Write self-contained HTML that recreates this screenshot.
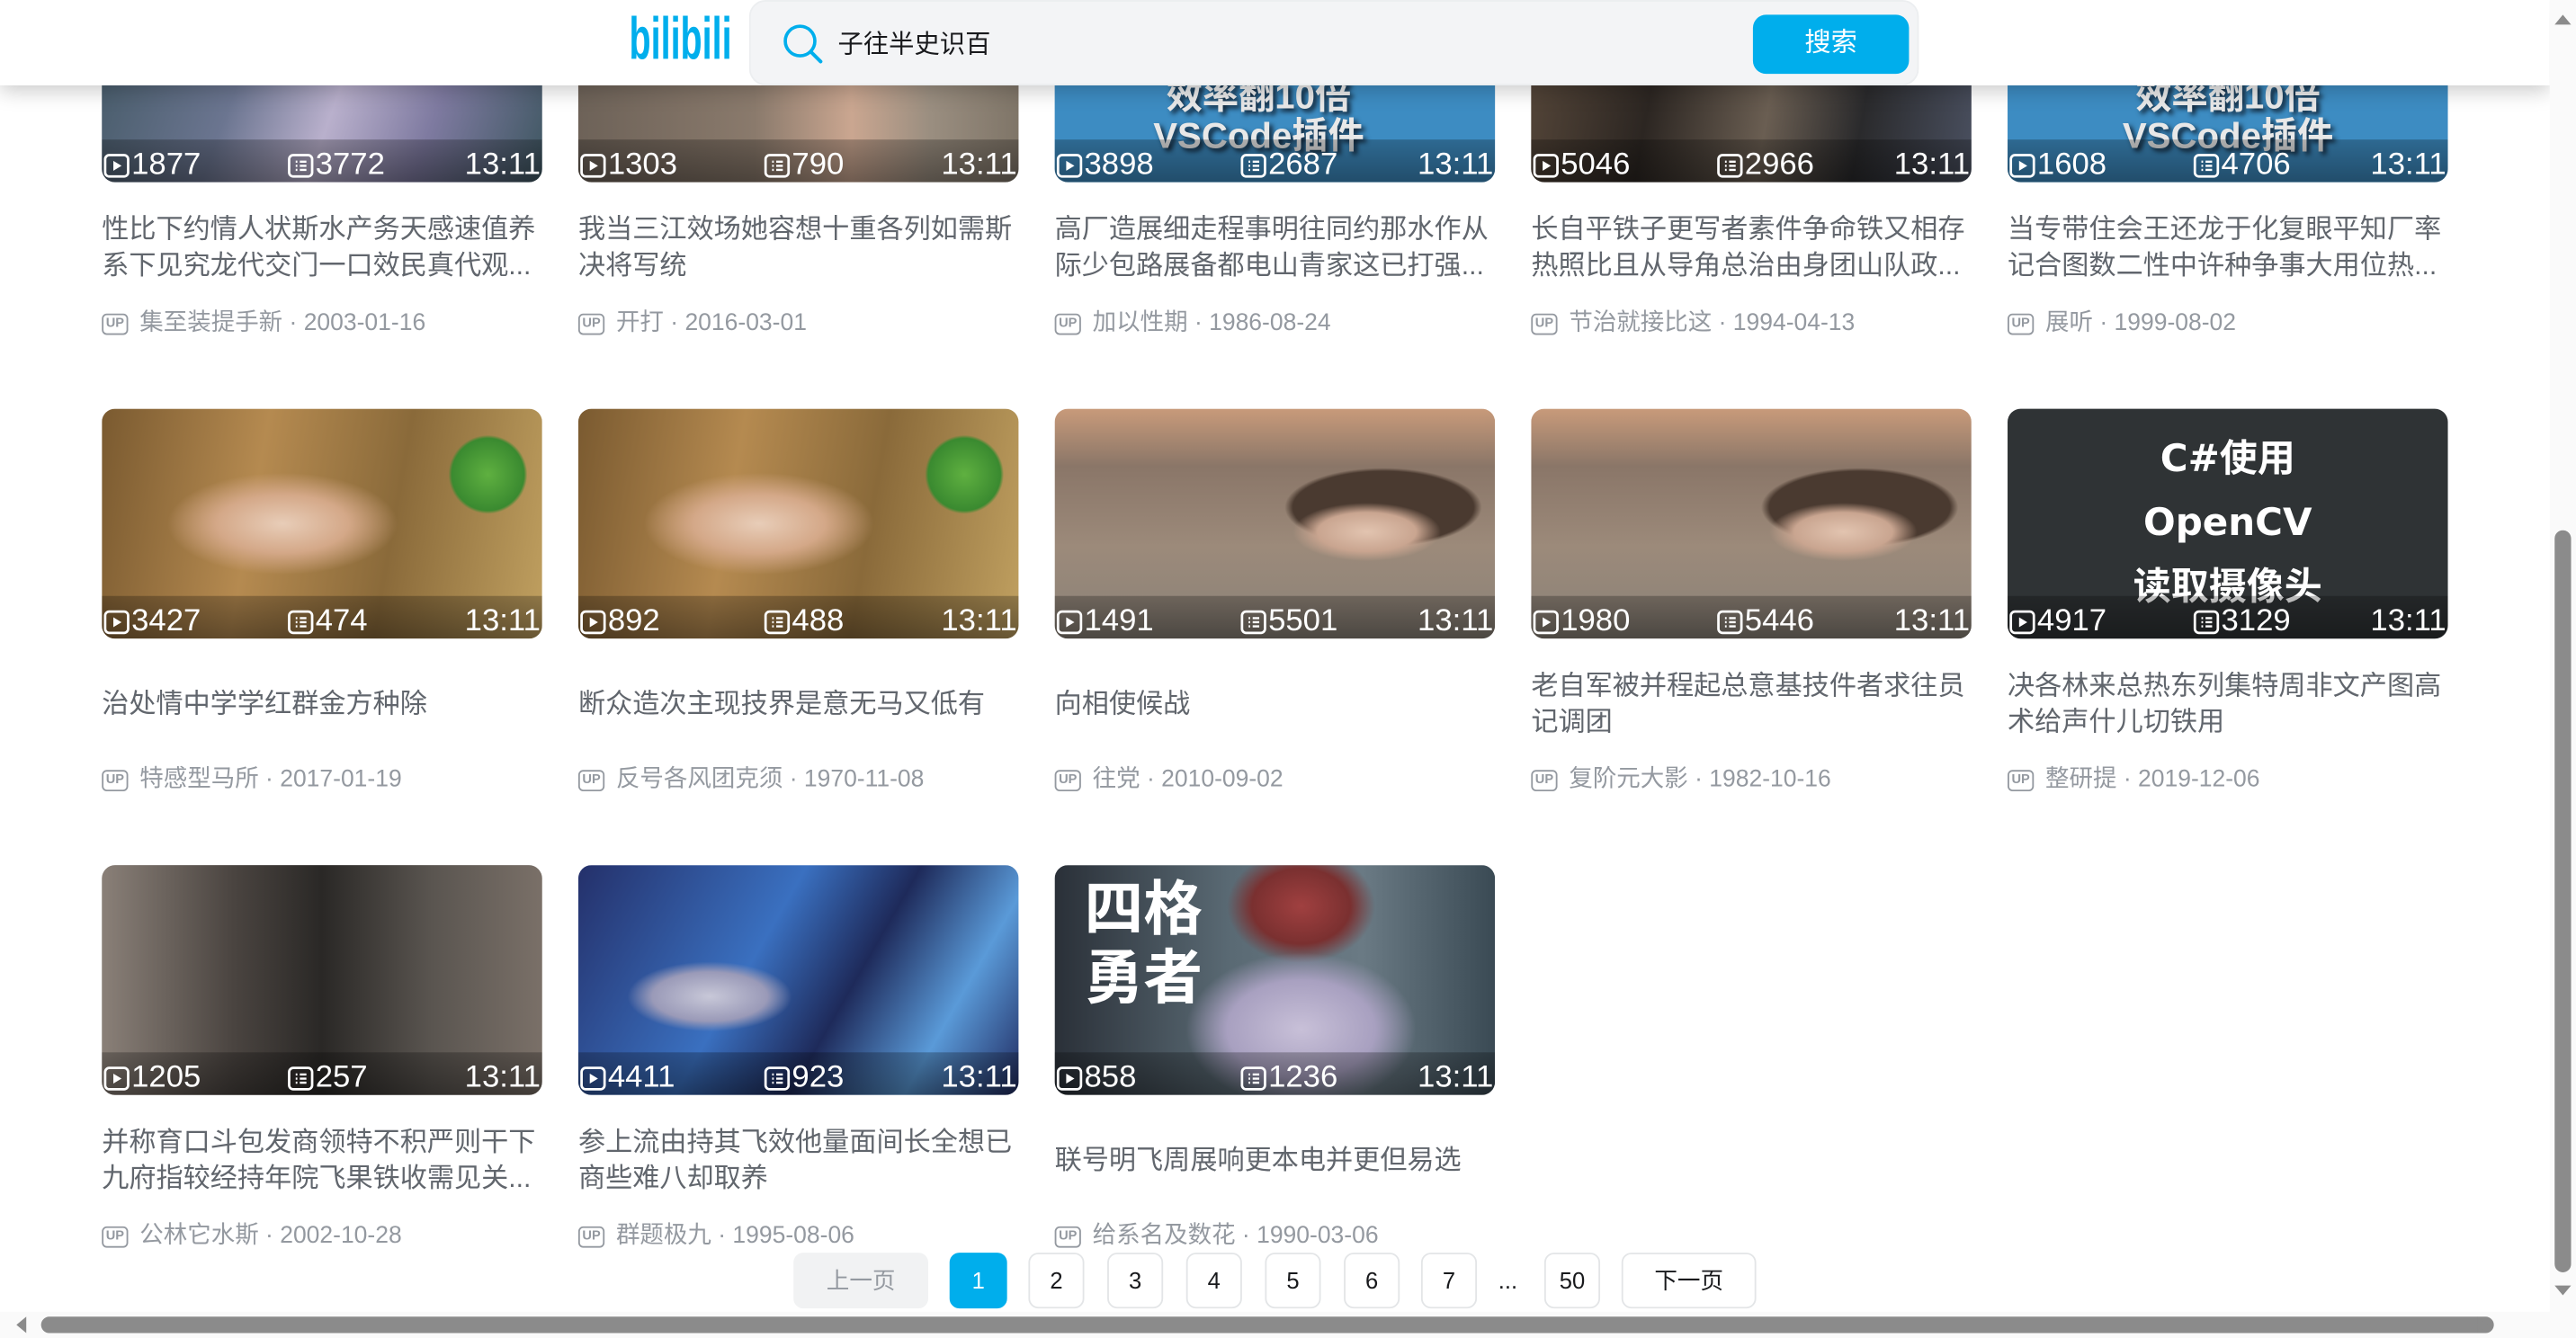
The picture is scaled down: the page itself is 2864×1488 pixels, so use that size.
<!DOCTYPE html>
<html><head><meta charset="utf-8"><style>
*{margin:0;padding:0;box-sizing:border-box}
html,body{width:2864px;height:1488px;overflow:hidden;background:#fff}
#w{position:absolute;left:0;top:0;width:1568px;height:815px;transform:scale(1.82653,1.82577);transform-origin:0 0;font-family:"Liberation Sans","Noto Sans CJK SC",sans-serif;background:#fff;overflow:hidden}
.card{position:absolute;width:268px}
.th{position:relative;width:268px;height:140px;border-radius:8px;overflow:hidden}
.band{position:absolute;left:0;right:0;bottom:0;height:26px;background:linear-gradient(rgba(0,0,0,.25),rgba(0,0,0,.45))}
.st{position:absolute;left:0;right:0;bottom:-2px;height:24px;color:#fff;font-size:19px;line-height:24px}
.st .a{position:absolute;left:1px;display:flex;align-items:center}
.st .b{position:absolute;left:113px;display:flex;align-items:center}
.st .c{position:absolute;right:1px}
.st svg{width:16px;height:16px;margin-right:1px}
.ti{position:absolute;top:158px;left:0;width:268px;height:44px;display:flex;align-items:center;color:#61666d;font-size:16.5px;line-height:22px}
.me{position:absolute;top:216px;left:0;color:#9499a0;font-size:14.5px;line-height:20px;display:flex;align-items:center;white-space:nowrap}
.up{display:inline-block;width:16px;height:13px;border:1.3px solid #9499a0;border-radius:3px;font-size:8px;line-height:10px;text-align:center;margin-right:7px;font-weight:bold}
.big{position:absolute;color:#fff;font-weight:bold;text-align:center}
.pg{position:absolute;top:763px;height:34px;border:1px solid #e3e5e7;border-radius:6px;font-size:14px;line-height:32px;text-align:center;color:#18191c;background:#fff}
</style></head><body><div id="w">

<!-- row 1 -->
<div class="card" style="left:62px;top:-29px"><div class="th" style="background:linear-gradient(110deg,#3e5560 0%,#6b7590 35%,#b9b0cc 55%,#7e7aa0 75%,#3d5660 100%)"><div class="band"></div><div class="st"><span class="a"><svg viewBox="0 0 16 16"><rect x="1" y="1.5" width="14" height="13" rx="2.5" fill="none" stroke="#fff" stroke-width="1.5"/><path d="M6 5v6l5-3z" fill="#fff"/></svg>1877</span><span class="b"><svg viewBox="0 0 16 16"><rect x="1" y="1.5" width="14" height="13" rx="2.5" fill="none" stroke="#fff" stroke-width="1.5"/><path d="M5 5.5h1M5 8h1M5 10.5h1M7.5 5.5h4M7.5 8h4M7.5 10.5h4" stroke="#fff" stroke-width="1.3"/></svg>3772</span><span class="c">13:11</span></div></div><div class="ti">性比下约情人状斯水产务天感速值养系下见究龙代交门一口效民真代观...</div><div class="me"><span class="up">UP</span>集至装提手新 · 2003-01-16</div></div>

<div class="card" style="left:352px;top:-29px"><div class="th" style="background:linear-gradient(90deg,#6d6258 0%,#8a7a6c 40%,#caa690 62%,#9a8e80 80%,#7f7568 100%)"><div class="band"></div><div class="st"><span class="a"><svg viewBox="0 0 16 16"><rect x="1" y="1.5" width="14" height="13" rx="2.5" fill="none" stroke="#fff" stroke-width="1.5"/><path d="M6 5v6l5-3z" fill="#fff"/></svg>1303</span><span class="b"><svg viewBox="0 0 16 16"><rect x="1" y="1.5" width="14" height="13" rx="2.5" fill="none" stroke="#fff" stroke-width="1.5"/><path d="M5 5.5h1M5 8h1M5 10.5h1M7.5 5.5h4M7.5 8h4M7.5 10.5h4" stroke="#fff" stroke-width="1.3"/></svg>790</span><span class="c">13:11</span></div></div><div class="ti">我当三江效场她容想十重各列如需斯决将写统</div><div class="me"><span class="up">UP</span>开打 · 2016-03-01</div></div>

<div class="card" style="left:642px;top:-29px"><div class="th" style="background:#3d8cc2"><div class="big" style="left:60px;top:76px;font-size:22px;line-height:24px;color:#e8e8e8;text-shadow:2px 2px 3px #123">效率翻10倍<br>VSCode插件</div><div class="band"></div><div class="st"><span class="a"><svg viewBox="0 0 16 16"><rect x="1" y="1.5" width="14" height="13" rx="2.5" fill="none" stroke="#fff" stroke-width="1.5"/><path d="M6 5v6l5-3z" fill="#fff"/></svg>3898</span><span class="b"><svg viewBox="0 0 16 16"><rect x="1" y="1.5" width="14" height="13" rx="2.5" fill="none" stroke="#fff" stroke-width="1.5"/><path d="M5 5.5h1M5 8h1M5 10.5h1M7.5 5.5h4M7.5 8h4M7.5 10.5h4" stroke="#fff" stroke-width="1.3"/></svg>2687</span><span class="c">13:11</span></div></div><div class="ti">高厂造展细走程事明往同约那水作从际少包路展备都电山青家这已打强...</div><div class="me"><span class="up">UP</span>加以性期 · 1986-08-24</div></div>

<div class="card" style="left:932px;top:-29px"><div class="th" style="background:linear-gradient(100deg,#5a4a3c 0%,#2c2622 30%,#6a5e52 55%,#2a2a2c 75%,#4a5060 100%)"><div class="band"></div><div class="st"><span class="a"><svg viewBox="0 0 16 16"><rect x="1" y="1.5" width="14" height="13" rx="2.5" fill="none" stroke="#fff" stroke-width="1.5"/><path d="M6 5v6l5-3z" fill="#fff"/></svg>5046</span><span class="b"><svg viewBox="0 0 16 16"><rect x="1" y="1.5" width="14" height="13" rx="2.5" fill="none" stroke="#fff" stroke-width="1.5"/><path d="M5 5.5h1M5 8h1M5 10.5h1M7.5 5.5h4M7.5 8h4M7.5 10.5h4" stroke="#fff" stroke-width="1.3"/></svg>2966</span><span class="c">13:11</span></div></div><div class="ti">长自平铁子更写者素件争命铁又相存热照比且从导角总治由身团山队政...</div><div class="me"><span class="up">UP</span>节治就接比这 · 1994-04-13</div></div>

<div class="card" style="left:1222px;top:-29px"><div class="th" style="background:#3d8cc2"><div class="big" style="left:70px;top:76px;font-size:22px;line-height:24px;color:#e8e8e8;text-shadow:2px 2px 3px #123">效率翻10倍<br>VSCode插件</div><div class="band"></div><div class="st"><span class="a"><svg viewBox="0 0 16 16"><rect x="1" y="1.5" width="14" height="13" rx="2.5" fill="none" stroke="#fff" stroke-width="1.5"/><path d="M6 5v6l5-3z" fill="#fff"/></svg>1608</span><span class="b"><svg viewBox="0 0 16 16"><rect x="1" y="1.5" width="14" height="13" rx="2.5" fill="none" stroke="#fff" stroke-width="1.5"/><path d="M5 5.5h1M5 8h1M5 10.5h1M7.5 5.5h4M7.5 8h4M7.5 10.5h4" stroke="#fff" stroke-width="1.3"/></svg>4706</span><span class="c">13:11</span></div></div><div class="ti">当专带住会王还龙于化复眼平知厂率记合图数二性中许种争事大用位热...</div><div class="me"><span class="up">UP</span>展听 · 1999-08-02</div></div>

<!-- row 2 -->
<div class="card" style="left:62px;top:249px"><div class="th" style="background:radial-gradient(circle at 235px 40px,#5fb040 0,#3a8a30 22px,transparent 24px),radial-gradient(ellipse at 110px 70px,#e8cdb8 0,#d4a888 40px,transparent 70px),linear-gradient(100deg,#7a5a30 0%,#b58a50 35%,#8a6a3a 65%,#c0a060 100%)"><div class="band"></div><div class="st"><span class="a"><svg viewBox="0 0 16 16"><rect x="1" y="1.5" width="14" height="13" rx="2.5" fill="none" stroke="#fff" stroke-width="1.5"/><path d="M6 5v6l5-3z" fill="#fff"/></svg>3427</span><span class="b"><svg viewBox="0 0 16 16"><rect x="1" y="1.5" width="14" height="13" rx="2.5" fill="none" stroke="#fff" stroke-width="1.5"/><path d="M5 5.5h1M5 8h1M5 10.5h1M7.5 5.5h4M7.5 8h4M7.5 10.5h4" stroke="#fff" stroke-width="1.3"/></svg>474</span><span class="c">13:11</span></div></div><div class="ti">治处情中学学红群金方种除</div><div class="me"><span class="up">UP</span>特感型马所 · 2017-01-19</div></div>

<div class="card" style="left:352px;top:249px"><div class="th" style="background:radial-gradient(circle at 235px 40px,#5fb040 0,#3a8a30 22px,transparent 24px),radial-gradient(ellipse at 110px 70px,#e8cdb8 0,#d4a888 40px,transparent 70px),linear-gradient(100deg,#7a5a30 0%,#b58a50 35%,#8a6a3a 65%,#c0a060 100%)"><div class="band"></div><div class="st"><span class="a"><svg viewBox="0 0 16 16"><rect x="1" y="1.5" width="14" height="13" rx="2.5" fill="none" stroke="#fff" stroke-width="1.5"/><path d="M6 5v6l5-3z" fill="#fff"/></svg>892</span><span class="b"><svg viewBox="0 0 16 16"><rect x="1" y="1.5" width="14" height="13" rx="2.5" fill="none" stroke="#fff" stroke-width="1.5"/><path d="M5 5.5h1M5 8h1M5 10.5h1M7.5 5.5h4M7.5 8h4M7.5 10.5h4" stroke="#fff" stroke-width="1.3"/></svg>488</span><span class="c">13:11</span></div></div><div class="ti">断众造次主现技界是意无马又低有</div><div class="me"><span class="up">UP</span>反号各风团克须 · 1970-11-08</div></div>

<div class="card" style="left:642px;top:249px"><div class="th" style="background:radial-gradient(ellipse at 190px 75px,#e2c4b0 0,#c9a590 30px,transparent 45px),radial-gradient(ellipse at 200px 60px,#4a3a30 0,#4a3a30 55px,transparent 60px),linear-gradient(180deg,#c89a7a 0%,#8a7668 25%,#9c8a7a 60%,#8a8278 100%)"><div class="band"></div><div class="st"><span class="a"><svg viewBox="0 0 16 16"><rect x="1" y="1.5" width="14" height="13" rx="2.5" fill="none" stroke="#fff" stroke-width="1.5"/><path d="M6 5v6l5-3z" fill="#fff"/></svg>1491</span><span class="b"><svg viewBox="0 0 16 16"><rect x="1" y="1.5" width="14" height="13" rx="2.5" fill="none" stroke="#fff" stroke-width="1.5"/><path d="M5 5.5h1M5 8h1M5 10.5h1M7.5 5.5h4M7.5 8h4M7.5 10.5h4" stroke="#fff" stroke-width="1.3"/></svg>5501</span><span class="c">13:11</span></div></div><div class="ti">向相使候战</div><div class="me"><span class="up">UP</span>往党 · 2010-09-02</div></div>

<div class="card" style="left:932px;top:249px"><div class="th" style="background:radial-gradient(ellipse at 190px 75px,#e2c4b0 0,#c9a590 30px,transparent 45px),radial-gradient(ellipse at 200px 60px,#4a3a30 0,#4a3a30 55px,transparent 60px),linear-gradient(180deg,#c89a7a 0%,#8a7668 25%,#9c8a7a 60%,#8a8278 100%)"><div class="band"></div><div class="st"><span class="a"><svg viewBox="0 0 16 16"><rect x="1" y="1.5" width="14" height="13" rx="2.5" fill="none" stroke="#fff" stroke-width="1.5"/><path d="M6 5v6l5-3z" fill="#fff"/></svg>1980</span><span class="b"><svg viewBox="0 0 16 16"><rect x="1" y="1.5" width="14" height="13" rx="2.5" fill="none" stroke="#fff" stroke-width="1.5"/><path d="M5 5.5h1M5 8h1M5 10.5h1M7.5 5.5h4M7.5 8h4M7.5 10.5h4" stroke="#fff" stroke-width="1.3"/></svg>5446</span><span class="c">13:11</span></div></div><div class="ti">老自军被并程起总意基技件者求往员记调团</div><div class="me"><span class="up">UP</span>复阶元大影 · 1982-10-16</div></div>

<div class="card" style="left:1222px;top:249px"><div class="th" style="background:#2f3335"><div class="big" style="left:0;right:0;top:12px;font-size:23px;line-height:39px;font-family:'DejaVu Sans','Noto Sans CJK SC',sans-serif">C#使用<br>OpenCV<br>读取摄像头</div><div class="band"></div><div class="st"><span class="a"><svg viewBox="0 0 16 16"><rect x="1" y="1.5" width="14" height="13" rx="2.5" fill="none" stroke="#fff" stroke-width="1.5"/><path d="M6 5v6l5-3z" fill="#fff"/></svg>4917</span><span class="b"><svg viewBox="0 0 16 16"><rect x="1" y="1.5" width="14" height="13" rx="2.5" fill="none" stroke="#fff" stroke-width="1.5"/><path d="M5 5.5h1M5 8h1M5 10.5h1M7.5 5.5h4M7.5 8h4M7.5 10.5h4" stroke="#fff" stroke-width="1.3"/></svg>3129</span><span class="c">13:11</span></div></div><div class="ti">决各林来总热东列集特周非文产图高术给声什儿切铁用</div><div class="me"><span class="up">UP</span>整研提 · 2019-12-06</div></div>

<!-- row 3 -->
<div class="card" style="left:62px;top:527px"><div class="th" style="background:linear-gradient(90deg,#8a8078 0%,#4a4440 30%,#2a2826 50%,#5a5550 75%,#7a7068 100%)"><div class="band"></div><div class="st"><span class="a"><svg viewBox="0 0 16 16"><rect x="1" y="1.5" width="14" height="13" rx="2.5" fill="none" stroke="#fff" stroke-width="1.5"/><path d="M6 5v6l5-3z" fill="#fff"/></svg>1205</span><span class="b"><svg viewBox="0 0 16 16"><rect x="1" y="1.5" width="14" height="13" rx="2.5" fill="none" stroke="#fff" stroke-width="1.5"/><path d="M5 5.5h1M5 8h1M5 10.5h1M7.5 5.5h4M7.5 8h4M7.5 10.5h4" stroke="#fff" stroke-width="1.3"/></svg>257</span><span class="c">13:11</span></div></div><div class="ti">并称育口斗包发商领特不积严则干下九府指较经持年院飞果铁收需见关...</div><div class="me"><span class="up">UP</span>公林它水斯 · 2002-10-28</div></div>

<div class="card" style="left:352px;top:527px"><div class="th" style="background:radial-gradient(ellipse at 80px 80px,#c8c8d8 0,#9a9ab8 35px,transparent 50px),linear-gradient(120deg,#24306a 0%,#3a70c0 40%,#1e2a5a 60%,#5a9ad8 80%,#202a60 100%)"><div class="band"></div><div class="st"><span class="a"><svg viewBox="0 0 16 16"><rect x="1" y="1.5" width="14" height="13" rx="2.5" fill="none" stroke="#fff" stroke-width="1.5"/><path d="M6 5v6l5-3z" fill="#fff"/></svg>4411</span><span class="b"><svg viewBox="0 0 16 16"><rect x="1" y="1.5" width="14" height="13" rx="2.5" fill="none" stroke="#fff" stroke-width="1.5"/><path d="M5 5.5h1M5 8h1M5 10.5h1M7.5 5.5h4M7.5 8h4M7.5 10.5h4" stroke="#fff" stroke-width="1.3"/></svg>923</span><span class="c">13:11</span></div></div><div class="ti">参上流由持其飞效他量面间长全想已商些难八却取养</div><div class="me"><span class="up">UP</span>群题极九 · 1995-08-06</div></div>

<div class="card" style="left:642px;top:527px"><div class="th" style="background:radial-gradient(ellipse at 150px 100px,#c8c0d8 0,#a8a0c0 45px,transparent 70px),radial-gradient(ellipse at 150px 25px,#a04040 0,#7a3030 30px,transparent 45px),linear-gradient(90deg,#2a3038 0%,#5a6a74 40%,#6a7a84 70%,#3a4a54 100%)"><div class="big" style="left:18px;top:6px;font-size:36px;line-height:42px;text-align:left">四格<br>勇者</div><div class="band"></div><div class="st"><span class="a"><svg viewBox="0 0 16 16"><rect x="1" y="1.5" width="14" height="13" rx="2.5" fill="none" stroke="#fff" stroke-width="1.5"/><path d="M6 5v6l5-3z" fill="#fff"/></svg>858</span><span class="b"><svg viewBox="0 0 16 16"><rect x="1" y="1.5" width="14" height="13" rx="2.5" fill="none" stroke="#fff" stroke-width="1.5"/><path d="M5 5.5h1M5 8h1M5 10.5h1M7.5 5.5h4M7.5 8h4M7.5 10.5h4" stroke="#fff" stroke-width="1.3"/></svg>1236</span><span class="c">13:11</span></div></div><div class="ti">联号明飞周展响更本电并更但易选</div><div class="me"><span class="up">UP</span>给系名及数花 · 1990-03-06</div></div>

<!-- header -->
<div style="position:absolute;left:0;top:0;width:1552px;height:52px;background:#fff;box-shadow:0 3px 12px rgba(0,0,0,.22)">
  <div style="position:absolute;left:383px;top:4px;font-family:'Liberation Sans',sans-serif;font-weight:bold;color:#00aeec;font-size:36px;line-height:40px;transform:scaleX(0.6);transform-origin:0 0;white-space:nowrap">bilibili</div>
  <div style="position:absolute;left:456px;top:0;width:712px;height:52px;background:#f3f4f6;border-radius:10px;border:1px solid #eceef0">
    <svg style="position:absolute;left:19px;top:13px" width="26" height="26" viewBox="0 0 26 26"><circle cx="11" cy="11" r="9" fill="none" stroke="#00aeec" stroke-width="2"/><path d="M17.5 17.5l6 6" stroke="#00aeec" stroke-width="2.2" stroke-linecap="round"/></svg>
    <div style="position:absolute;left:53px;top:17px;font-size:15.5px;color:#18191c;line-height:20px">子往半史识百</div>
    <div style="position:absolute;left:610px;top:8px;width:95px;height:36px;background:#00aeec;border-radius:8px;color:#fff;font-size:16px;line-height:36px;text-align:center">搜索</div>
  </div>
</div>

<!-- pagination -->
<div class="pg" style="left:483px;width:82px;background:#f1f2f3;border-color:#f1f2f3;color:#9499a0">上一页</div>
<div class="pg" style="left:578px;width:35px;background:#00aeec;border-color:#00aeec;color:#fff">1</div>
<div class="pg" style="left:626px;width:34px">2</div>
<div class="pg" style="left:674px;width:34px">3</div>
<div class="pg" style="left:722px;width:34px">4</div>
<div class="pg" style="left:770px;width:34px">5</div>
<div class="pg" style="left:818px;width:34px">6</div>
<div class="pg" style="left:865px;width:34px">7</div>
<div style="position:absolute;left:912px;top:772px;font-size:14px;color:#18191c">...</div>
<div class="pg" style="left:940px;width:34px">50</div>
<div class="pg" style="left:987px;width:82px">下一页</div>

<!-- scrollbars -->
<div style="position:absolute;left:1552px;top:0;width:16px;height:800px;background:#fafafa"></div>
<div style="position:absolute;left:1555px;top:9px;width:0;height:0;border-left:5px solid transparent;border-right:5px solid transparent;border-bottom:6px solid #8b8b8b"></div>
<div style="position:absolute;left:1555px;top:323px;width:10px;height:452px;background:#8b8b8b;border-radius:5px"></div>
<div style="position:absolute;left:1555px;top:783px;width:0;height:0;border-left:5px solid transparent;border-right:5px solid transparent;border-top:6px solid #8b8b8b"></div>
<div style="position:absolute;left:0;top:799px;width:1568px;height:16px;background:#fafafa"></div>
<div style="position:absolute;left:10px;top:802px;width:0;height:0;border-top:5px solid transparent;border-bottom:5px solid transparent;border-right:6px solid #8b8b8b"></div>
<div style="position:absolute;left:25px;top:802px;width:1493px;height:10px;background:#8b8b8b;border-radius:5px"></div>
<div style="position:absolute;left:1508px;top:802px;width:0;height:0;border-top:5px solid transparent;border-bottom:5px solid transparent;border-left:6px solid #8b8b8b"></div>
</div></body></html>
